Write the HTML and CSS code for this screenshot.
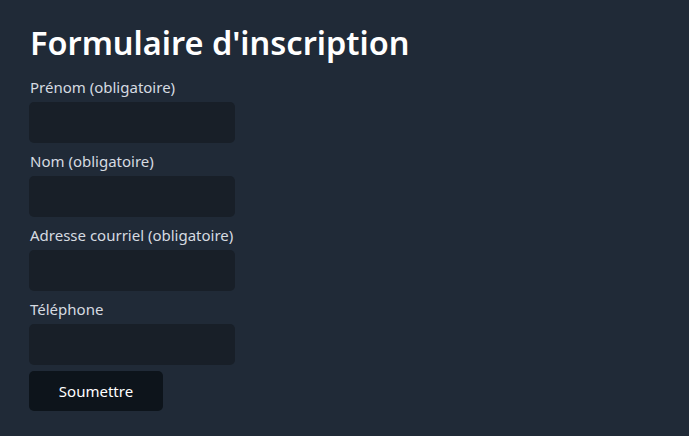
FILE: index.html
```html
<!DOCTYPE html>
<html lang="fr">
<head>
<meta charset="utf-8">
<title>Formulaire d'inscription</title>
<link rel="stylesheet" href="styles.css">
</head>
<body>
<main class="page">
  <h1 class="title">Formulaire d'inscription</h1>
  <form class="form">
    <label class="label" for="prenom">Prénom (obligatoire)</label>
    <input class="field" id="prenom" type="text">
    <label class="label" for="nom">Nom (obligatoire)</label>
    <input class="field" id="nom" type="text">
    <label class="label" for="courriel">Adresse courriel (obligatoire)</label>
    <input class="field" id="courriel" type="email">
    <label class="label" for="tel">Téléphone</label>
    <input class="field" id="tel" type="tel">
    <button class="submit" type="button">Soumettre</button>
  </form>
</main>
</body>
</html>
```
FILE: styles.css
```css
html, body {
  margin: 0;
  padding: 0;
  background: #202a37;
  height: 100%;
}
body {
  font-family: "Noto Sans", "Open Sans", sans-serif;
  color: #d6dbe1;
}
.page {
  padding: 21px 29px;
}
.title {
  margin: 0 0 9px 1px;
  font-size: 32.5px;
  line-height: 44px;
  font-weight: 600;
  color: #ffffff;
}
.form {
  display: flex;
  flex-direction: column;
  align-items: flex-start;
}
.label {
  font-size: 15px;
  line-height: 22px;
  margin: 2px 0 4px 1px;
}
.field {
  box-sizing: border-box;
  width: 206px;
  height: 41px;
  margin: 0 0 5px 0;
  border: none;
  border-radius: 5px;
  background: #181f28;
  color: #fff;
  outline: none;
}
.submit {
  box-sizing: border-box;
  width: 134px;
  height: 40px;
  margin-top: 1px;
  border: none;
  border-radius: 5px;
  background: #0d141b;
  color: #ffffff;
  font-family: "Noto Sans", "Open Sans", sans-serif;
  font-size: 15px;
}
```
